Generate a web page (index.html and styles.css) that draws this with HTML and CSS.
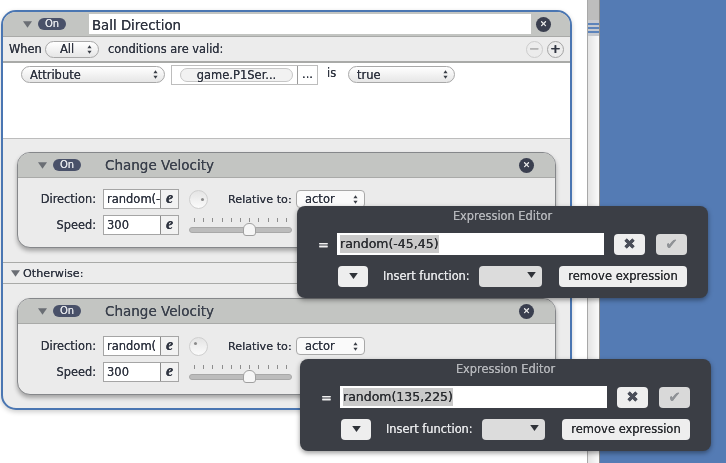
FILE: index.html
```html
<!doctype html>
<html>
  <head>
    <meta charset="utf-8" />
    <title>Ball Direction</title>
    <link rel="stylesheet" href="styles.css">
  </head>
  <body>
    <svg class="defs" width="0" height="0">
      <symbol id="updown" viewBox="0 0 6 10">
        <path d="M3 0 L5.5 3.6 H0.5 Z M3 10 L5.5 6.4 H0.5 Z" />
      </symbol>
      <symbol id="down" viewBox="0 0 10 7">
        <path d="M0 0 H10 L5 7 Z" />
      </symbol>
    </svg>

    <div class="stage">
      <div class="gutter">
        <div class="rule">
          <div class="rule-head">
            <svg class="tri"><use href="#down" /></svg>
            <span class="toggle">On</span>
            <div class="title-input">Ball Direction</div>
            <span class="close">&#10005;</span>
          </div>

          <div class="when">
            <span>When</span>
            <span class="select select-all">All<svg class="spin"><use href="#updown" /></svg></span>
            <span class="when-text">conditions are valid:</span>
            <span class="round round-off">&minus;</span>
            <span class="round">+</span>
          </div>

          <div class="conditions">
            <span class="select select-attr">Attribute<svg class="spin"><use href="#updown" /></svg></span>
            <span class="attr-box">
              <span class="attr-pill">game.P1Ser...</span>
              <span class="attr-more">...</span>
            </span>
            <span class="is">is</span>
            <span class="select select-true">true<svg class="spin"><use href="#updown" /></svg></span>
          </div>

          <div class="actions">
            <div class="card">
              <div class="card-head">
                <svg class="tri"><use href="#down" /></svg>
                <span class="toggle">On</span>
                <span class="card-title">Change Velocity</span>
                <span class="close">&#10005;</span>
              </div>
              <div class="card-body">
                <div class="card-row">
                  <label class="field-label">Direction:</label>
                  <span class="field"><span class="field-text">random(-</span><span class="field-e">e</span></span>
                  <span class="dial"><i class="dial-dot dial-right"></i></span>
                  <label class="rel-label">Relative to:</label>
                  <span class="select select-actor">actor<svg class="spin"><use href="#updown" /></svg></span>
                </div>
                <div class="card-row">
                  <label class="field-label">Speed:</label>
                  <span class="field"><span class="field-text">300</span><span class="field-e">e</span></span>
                  <span class="slider">
                    <span class="ticks"><i></i><i></i><i></i><i></i><i></i><i></i><i></i><i></i><i></i><i></i><i></i></span>
                    <span class="track"><i class="thumb"></i></span>
                  </span>
                </div>
              </div>
            </div>

            <div class="otherwise">
              <svg class="tri"><use href="#down" /></svg>
              <span>Otherwise:</span>
            </div>

            <div class="card">
              <div class="card-head">
                <svg class="tri"><use href="#down" /></svg>
                <span class="toggle">On</span>
                <span class="card-title">Change Velocity</span>
                <span class="close">&#10005;</span>
              </div>
              <div class="card-body">
                <div class="card-row">
                  <label class="field-label">Direction:</label>
                  <span class="field"><span class="field-text">random(</span><span class="field-e">e</span></span>
                  <span class="dial"><i class="dial-dot dial-left"></i></span>
                  <label class="rel-label">Relative to:</label>
                  <span class="select select-actor">actor<svg class="spin"><use href="#updown" /></svg></span>
                </div>
                <div class="card-row">
                  <label class="field-label">Speed:</label>
                  <span class="field"><span class="field-text">300</span><span class="field-e">e</span></span>
                  <span class="slider">
                    <span class="ticks"><i></i><i></i><i></i><i></i><i></i><i></i><i></i><i></i><i></i><i></i><i></i></span>
                    <span class="track"><i class="thumb"></i></span>
                  </span>
                </div>
              </div>
            </div>
          </div>
        </div>
      </div>

      <div class="scrollbar">
        <div class="scroll-thumb"></div>
        <div class="scroll-grip"><i></i><i></i><i></i></div>
        <div class="scroll-rest"></div>
      </div>
      <div class="desktop"></div>
    </div>

    <div class="editor editor-one">
      <div class="editor-title">Expression Editor</div>
      <div class="editor-row">
        <span class="equals">=</span>
        <div class="expr"><span class="expr-sel">random(-45,45)</span></div>
        <span class="btn btn-icon btn-x">&#10006;</span>
        <span class="btn btn-icon btn-ok">&#10004;</span>
      </div>
      <div class="editor-row editor-row-low">
        <span class="btn btn-drop"><svg class="drop"><use href="#down" /></svg></span>
        <span class="insert">Insert function:</span>
        <span class="btn btn-func"><svg class="drop"><use href="#down" /></svg></span>
        <span class="btn btn-remove">remove expression</span>
      </div>
    </div>

    <div class="editor editor-two">
      <div class="editor-title">Expression Editor</div>
      <div class="editor-row">
        <span class="equals">=</span>
        <div class="expr"><span class="expr-sel">random(135,225)</span></div>
        <span class="btn btn-icon btn-x">&#10006;</span>
        <span class="btn btn-icon btn-ok">&#10004;</span>
      </div>
      <div class="editor-row editor-row-low">
        <span class="btn btn-drop"><svg class="drop"><use href="#down" /></svg></span>
        <span class="insert">Insert function:</span>
        <span class="btn btn-func"><svg class="drop"><use href="#down" /></svg></span>
        <span class="btn btn-remove">remove expression</span>
      </div>
    </div>
  </body>
</html>
```

FILE: styles.css
```css
:root {
  --font-ui: "DejaVu Sans", "Open Sans", sans-serif;
  --color-blue: #4a76b2;
  --color-desk: #547bb4;
  --color-head: #c3c5c2;
  --color-panel: #ececec;
  --color-text: #2f3440;
  --color-editor: #3b3e45;
}
* {
  margin: 0;
  padding: 0;
  box-sizing: border-box;
}
html,
body {
  width: 726px;
  height: 463px;
  overflow: hidden;
  background: #ffffff;
  color: var(--color-text);
  font-family: var(--font-ui);
  font-size: 11.5px;
  text-shadow: 0 0 0.6px currentColor;
}
body {
  position: relative;
  filter: blur(0.4px);
}
.defs {
  position: absolute;
}
.stage {
  display: flex;
  height: 463px;
}
.gutter {
  width: 587px;
  padding: 10px 0 0 1px;
}
.rule {
  width: 571px;
  height: 400px;
  display: flex;
  flex-direction: column;
  border: 2px solid var(--color-blue);
  border-radius: 15px;
  overflow: hidden;
  background: var(--color-panel);
  box-shadow: 0 2px 5px rgba(0, 0, 0, 0.2);
}

/* top of the rule */
.rule-head {
  height: 25px;
  flex: none;
  display: flex;
  align-items: center;
  padding-left: 20px;
  background: var(--color-head);
  border-bottom: 1px solid #a9aaa8;
}
.tri {
  width: 9px;
  height: 7px;
  fill: #6a6e74;
  flex: none;
}
.toggle {
  width: 28px;
  height: 12px;
  flex: none;
  margin-left: 6px;
  border-radius: 6px;
  background: #495169;
  color: #e4e6ea;
  font-size: 10px;
  line-height: 12px;
  text-align: center;
}
.title-input {
  width: 442px;
  height: 20px;
  margin-left: 23px;
  padding-left: 3px;
  background: #ffffff;
  font-size: 13.3px;
  line-height: 23px;
}
.close {
  width: 15px;
  height: 15px;
  flex: none;
  margin-left: 5px;
  border-radius: 50%;
  background: #3a3f4f;
  color: #e8e8e8;
  font-size: 9px;
  line-height: 15px;
  text-align: center;
}

.when {
  height: 26px;
  flex: none;
  display: flex;
  align-items: center;
  padding-left: 6px;
  border-bottom: 2px solid #a9aaa8;
  font-size: 11.4px;
}
.when > span:first-child {
  width: 32px;
  flex: none;
}
.select {
  height: 17px;
  flex: none;
  display: flex;
  align-items: center;
  justify-content: space-between;
  padding: 0 6px 0 8px;
  border: 1px solid #a8a8a8;
  border-radius: 9px;
  background: linear-gradient(#ffffff, #e6e6e6);
  font-size: 11.5px;
}
.spin {
  width: 5px;
  height: 9px;
  fill: #3a3e46;
  flex: none;
}
.select-all {
  width: 54px;
  margin-left: 4px;
  padding-left: 14px;
}
.when-text {
  margin-left: 9px;
  flex: 1;
}
.round {
  width: 17px;
  height: 17px;
  flex: none;
  margin-right: 4px;
  border: 1px solid #a4a4a4;
  border-radius: 50%;
  font-size: 13px;
  font-weight: bold;
  line-height: 14px;
  text-align: center;
}
.round-off {
  color: #b4b4b4;
  border-color: #cccccc;
}
.round + .round {
  margin-right: 6px;
}

.conditions {
  height: 76px;
  flex: none;
  display: flex;
  align-items: flex-start;
  padding: 3px 0 0 18px;
  background: #ffffff;
  border-bottom: 1px solid #bcbcbc;
}
.select-attr {
  width: 144px;
}
.attr-box {
  width: 147px;
  height: 20px;
  flex: none;
  display: flex;
  align-items: center;
  margin: -1px 0 0 6px;
  border: 1px solid #bdbdbd;
}
.attr-pill {
  width: 113px;
  height: 14px;
  margin-left: 8px;
  border: 1px solid #c6c6c6;
  border-radius: 7px;
  background: #f2f2f2;
  font-size: 11.5px;
  line-height: 12px;
  text-align: center;
}
.attr-more {
  width: 20px;
  height: 18px;
  margin-left: 4px;
  border-left: 1px solid #9a9a9a;
  line-height: 16px;
  text-align: center;
}
.is {
  margin-left: 9px;
  width: 21px;
  line-height: 15px;
}
.select-true {
  width: 107px;
}

/* action cards */
.actions {
  flex: 1;
  padding: 13px 0 0;
}
.card {
  width: 539px;
  margin-left: 14px;
  border: 1px solid #85878a;
  border-radius: 13px;
  overflow: hidden;
  background: #ebebeb;
  box-shadow: 0 3px 4px rgba(0, 0, 0, 0.3);
}
.card-head {
  height: 25px;
  display: flex;
  align-items: center;
  padding-left: 20px;
  background: var(--color-head);
  border-bottom: 1px solid #a9aaa8;
}
.card-title {
  flex: 1;
  margin-left: 24px;
  font-size: 13.5px;
  color: #3a404c;
}
.card-head .close {
  margin-right: 21px;
}
.card-body {
  padding: 11px 0 12px;
}
.otherwise + .card .card-body {
  padding-top: 12px;
}
.card-row {
  height: 20px;
  display: flex;
  align-items: center;
}
.card-row + .card-row {
  margin-top: 6px;
}
.field-label {
  width: 78px;
  flex: none;
  text-align: right;
  font-size: 11.4px;
}
.field {
  width: 76px;
  height: 20px;
  flex: none;
  display: flex;
  margin-left: 7px;
  border: 1px solid #a5a5a5;
  background: #ffffff;
}
.field-text {
  width: 56px;
  padding-left: 3px;
  overflow: hidden;
  font-size: 11.5px;
  line-height: 18px;
  white-space: nowrap;
}
.field-e {
  flex: 1;
  border-left: 1px solid #8a8a8a;
  background: #f2f2f2;
  font-family: "Liberation Serif", serif;
  font-size: 16px;
  font-style: italic;
  font-weight: bold;
  line-height: 16px;
  text-align: center;
}
.dial {
  position: relative;
  width: 19px;
  height: 19px;
  flex: none;
  margin-left: 10px;
  border: 1px solid #cfcfcf;
  border-radius: 50%;
  background: linear-gradient(#e4e4e4, #fbfbfb);
}
.dial-dot {
  position: absolute;
  width: 3px;
  height: 3px;
  border-radius: 50%;
  background: #8a8a8a;
}
.dial-right {
  top: 7px;
  right: 3px;
}
.dial-left {
  top: 4px;
  left: 4px;
}
.rel-label {
  width: 63px;
  flex: none;
  margin-left: 20px;
  font-size: 11.2px;
  white-space: nowrap;
}
.select-actor {
  width: 69px;
  height: 18px;
  margin-left: 5px;
  border-radius: 4px;
  background: #fafafa;
}
.slider {
  width: 103px;
  flex: none;
  display: flex;
  flex-direction: column;
  gap: 5px;
  margin-left: 10px;
}
.ticks {
  display: flex;
  justify-content: space-between;
  padding: 0 5px;
}
.ticks i {
  width: 1px;
  height: 4px;
  background: #8d8d8d;
}
.track {
  position: relative;
  height: 6px;
  border: 1px solid #a8a8a8;
  border-radius: 3px;
  background: #bcbcbc;
}
.thumb {
  position: absolute;
  left: 53px;
  top: -5px;
  width: 13px;
  height: 13px;
  border: 1px solid #a0a0a0;
  border-radius: 6px 6px 3px 3px;
  background: #f6f6f6;
}
.otherwise {
  height: 22px;
  display: flex;
  align-items: center;
  gap: 3px;
  margin: 14px 0 14px;
  padding-left: 8px;
  border-top: 1px solid #a9aaa8;
  border-bottom: 1px solid #a9aaa8;
  font-size: 11.2px;
}

/* right of the window */
.scrollbar {
  width: 13px;
  flex: none;
  display: flex;
  flex-direction: column;
  border-left: 1px solid #a8a8a8;
  border-right: 1px solid #8c8c8c;
}
.scroll-thumb {
  height: 20px;
  background: #bdbdbd;
}
.scroll-grip {
  height: 16px;
  display: flex;
  flex-direction: column;
  justify-content: center;
  gap: 2px;
  background: #c6c9cf;
}
.scroll-grip i {
  height: 2px;
  background: #5d84bb;
}
.scroll-rest {
  flex: 1;
  background: linear-gradient(90deg, #e4e4e4, #fafafa);
}
.desktop {
  flex: 1;
  background: var(--color-desk);
}

/* expression editors */
.editor {
  position: absolute;
  width: 411px;
  height: 92px;
  padding: 3px 22px 0 12px;
  border-radius: 8px;
  background: var(--color-editor);
  color: #f0f0f0;
  box-shadow: 0 2px 5px rgba(0, 0, 0, 0.4);
}
.editor-one {
  left: 297px;
  top: 206px;
}
.editor-two {
  left: 300px;
  top: 359px;
}
.editor-title {
  height: 15px;
  margin-bottom: 9px;
  padding-left: 10px;
  color: #b4b6ba;
  font-size: 11.4px;
  line-height: 15px;
  text-align: center;
}
.editor-row {
  height: 22px;
  display: flex;
  align-items: center;
}
.editor-row-low {
  margin-top: 10px;
}
.equals {
  width: 28px;
  flex: none;
  font-size: 13px;
  font-weight: bold;
  text-align: left;
  padding-left: 9px;
}
.expr {
  width: 267px;
  height: 22px;
  flex: none;
  padding-left: 3px;
  background: #ffffff;
  color: #2a2c30;
  font-size: 12.5px;
  line-height: 22px;
}
.expr-sel {
  display: inline-block;
  height: 18px;
  line-height: 18px;
  background: #c9c9c9;
}
.btn {
  flex: none;
  border-radius: 4px;
  background: #eeeeee;
  color: #2a2c30;
  text-align: center;
}
.btn-icon {
  width: 31px;
  height: 21px;
  font-size: 15px;
  line-height: 21px;
}
.btn-x {
  margin-left: 10px;
  color: #494d58;
}
.btn-ok {
  margin-left: 11px;
  color: #8f9296;
  background: #d9d9d9;
}
.btn-drop {
  width: 30px;
  height: 21px;
  margin-left: 29px;
  line-height: 19px;
}
.drop {
  width: 9px;
  height: 6px;
  fill: #2f3238;
}
.insert {
  width: 96px;
  flex: none;
  margin-left: 15px;
  font-size: 11.4px;
  color: #e6e7e9;
  white-space: nowrap;
}
.btn-func {
  width: 63px;
  height: 21px;
  padding: 0 6px 0 0;
  background: #dcdcdc;
  line-height: 16px;
  text-align: right;
}
.btn-remove {
  width: 128px;
  height: 21px;
  margin-left: 17px;
  font-size: 11.5px;
  line-height: 20px;
  white-space: nowrap;
}
```
